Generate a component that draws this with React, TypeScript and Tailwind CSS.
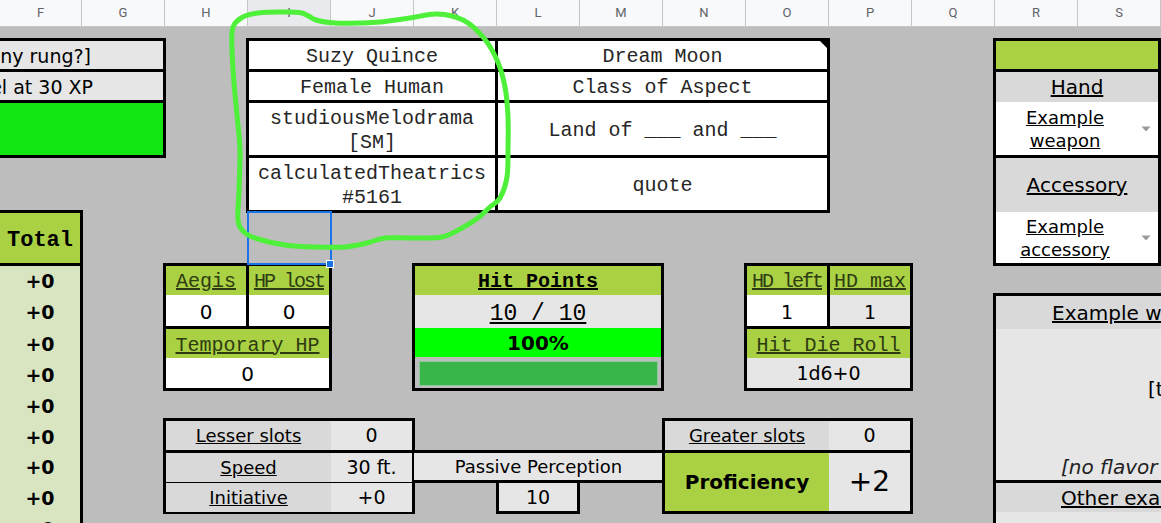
import type { ReactNode } from 'react'
import clsx from 'clsx'

const MONO = "font-['Liberation_Mono',monospace]"
const SANS = "font-['DejaVu_Sans',sans-serif]"

const COLS = ['F', 'G', 'H', 'I', 'J', 'K', 'L', 'M', 'N', 'O', 'P', 'Q', 'R', 'S']

// hand-drawn highlight loop around the name block
const LOOP: [number, number][] = [
  [233, 27], [243, 17], [258, 13], [280, 12], [302, 13], [316, 20], [335, 23], [360, 23],
  [380, 22], [410, 18], [437, 14], [463, 20], [483, 37], [497, 60], [505, 87], [508, 117],
  [508, 150], [507, 177], [500, 198], [490, 207], [478, 218], [462, 228], [442, 237], [412, 238],
  [385, 238], [367, 243], [345, 247], [315, 247], [285, 245], [258, 239], [244, 232], [238, 220],
  [239, 190], [240, 150], [237, 115], [234, 83], [232, 50],
]

function smoothClosed(pts: [number, number][]) {
  const n = pts.length
  const f = (v: number) => v.toFixed(1)
  let d = `M${pts[0][0]},${pts[0][1]}`
  for (let i = 0; i < n; i++) {
    const p0 = pts[(i - 1 + n) % n], p1 = pts[i], p2 = pts[(i + 1) % n], p3 = pts[(i + 2) % n]
    const c1x = p1[0] + (p2[0] - p0[0]) / 6, c1y = p1[1] + (p2[1] - p0[1]) / 6
    const c2x = p2[0] - (p3[0] - p1[0]) / 6, c2y = p2[1] - (p3[1] - p1[1]) / 6
    d += ` C${f(c1x)},${f(c1y)} ${f(c2x)},${f(c2y)} ${p2[0]},${p2[1]}`
  }
  return d + 'Z'
}

function C({ className, children }: { className?: string; children?: ReactNode }) {
  return <div className={clsx('flex items-center justify-center text-center', className)}>{children}</div>
}

function Caret() {
  return (
    <div className="w-[24px] shrink-0 flex items-center justify-center">
      <svg width="10" height="6" viewBox="0 0 10 6"><path d="M0.5 0.5h9L5 5.5z" fill="#9a9a9a" /></svg>
    </div>
  )
}

export default function App() {
  return (
    <div className={clsx('relative w-[1161px] h-[523px] overflow-hidden bg-[#bdbdbd] text-black', SANS)}>
      {/* column header */}
      <div className="flex h-[27px] bg-[#f8f9fa] border-b border-[#c4c7c5]">
        {COLS.map((c, i) => (
          <div
            key={c}
            className={clsx(
              "flex shrink-0 items-center justify-center border-r border-[#c4c7c5] text-[13px] text-[#5f6368] font-['Roboto',sans-serif]",
              i === 0 ? 'w-[82px]' : 'w-[83px]',
              c === 'I' && 'bg-[#e8eaed]',
            )}
          >
            {c}
          </div>
        ))}
      </div>

      {/* sheet body */}
      <div className="grid w-max grid-cols-[82px_repeat(15,83px)] grid-rows-[13px_31px_31px_55px_55px_53px_31px_32px_31px_31px_31px_31px_30px_31px_10px]">
        {/* level block, cut at left */}
        <div className="col-start-1 row-start-2 -ml-[20px] -mt-[2px] w-[186px] h-[120px] grid grid-rows-[28px_28px_52px] gap-y-[3px] bg-black p-[3px] text-[19px]">
          <C className="bg-[#e6e6e6] !justify-end pr-[72px] pt-[3px] overflow-hidden whitespace-nowrap">[how many rung?]</C>
          <C className="bg-[#e6e6e6] !justify-end pr-[70px] pt-[2px] overflow-hidden whitespace-nowrap">Level at 30 XP</C>
          <div className="bg-[#13e713]" />
        </div>

        {/* total column */}
        <div className="col-start-1 row-start-6 -ml-[20px] -mt-[2px] w-[103px] h-[340px] flex flex-col gap-y-[3px] bg-black p-[3px] pb-0">
          <C className={clsx('h-[50px] shrink-0 bg-[#a9d143] pl-[17px] pt-[5px] text-[22px] font-bold', MONO)}>Total</C>
          <div className="flex-1 flex flex-col bg-[#d9e4c1] pl-[17px] text-[19px] font-bold">
            {[30, 32, 31, 31, 31, 31, 30, 31, 31].map((h, i) => (
              <div key={i} style={{ height: h }} className="shrink-0 flex items-center justify-center pt-[1px]">+0</div>
            ))}
          </div>
        </div>

        {/* name block */}
        <div className={clsx('col-start-4 row-start-2 -ml-[2px] -mt-[2px] w-[584px] h-[175px] grid grid-cols-[246px_329px] grid-rows-[28px_28px_52px_52px] gap-[3px] bg-black p-[3px] text-[20px] leading-[24px] text-[#262626]', MONO)}>
          <C className="bg-white pt-[4px]">Suzy Quince</C>
          <C className="bg-white relative pt-[4px]">
            Dream Moon
            <svg className="absolute right-0 top-0" width="7" height="7" viewBox="0 0 7 7"><path d="M0 0h7v7z" fill="#000" /></svg>
          </C>
          <C className="bg-white pt-[4px]">Female Human</C>
          <C className="bg-white pt-[4px]">Class of Aspect</C>
          <C className="bg-white pt-[4px]">studiousMelodrama<br />[SM]</C>
          <C className="bg-white pt-[4px]">Land of ___ and ___</C>
          <C className="bg-white pt-[4px]">calculatedTheatrics<br />#5161</C>
          <C className="bg-white pt-[4px]">quote</C>
        </div>

        {/* selected cell */}
        <div className="col-start-4 row-start-6 -ml-[1px] -mt-[1px] w-[85px] h-[54px] border-2 border-[#1a73e8] relative z-10">
          <div className="absolute -right-[4px] -bottom-[5px] w-[8px] h-[8px] bg-[#1a73e8] border border-white" />
        </div>

        {/* aegis */}
        <div className="col-start-3 row-start-7 -ml-[2px] -mt-[2px] w-[169px] h-[128px] flex flex-col gap-y-[3px] bg-black p-[3px]">
          <div className="grid grid-cols-[80px_80px] grid-rows-[29px_31px] gap-x-[3px]">
            <C className={clsx('bg-[#a9d143] pt-[2px] text-[20px] underline text-[#2e3b12]', MONO)}>Aegis</C>
            <C className={clsx('bg-[#a9d143] pt-[2px] text-[20px] underline text-[#2e3b12] tracking-[-2px] whitespace-nowrap', MONO)}>HP lost</C>
            <C className="bg-white pt-[3px] text-[20px]">0</C>
            <C className="bg-white pt-[3px] text-[20px]">0</C>
          </div>
          <div className="grid grid-rows-[29px_30px]">
            <C className={clsx('bg-[#a9d143] pt-[4px] text-[20px] underline text-[#2e3b12]', MONO)}>Temporary HP</C>
            <C className="bg-white pt-[2px] text-[20px]">0</C>
          </div>
        </div>

        {/* hit points */}
        <div className="col-start-6 row-start-7 -ml-[2px] -mt-[2px] w-[252px] h-[128px] grid grid-rows-[29px_33px_29px_31px] border-[3px] border-black">
          <C className={clsx('bg-[#a9d143] pt-[2px] text-[20px] font-bold underline', MONO)}>Hit Points</C>
          <C className={clsx('bg-[#e6e6e6] pt-[5px] text-[23px] underline', MONO)}>10 / 10</C>
          <C className="bg-[#00ff00] text-[20px] font-bold">100%</C>
          <div className="bg-[#bdbdbd] pl-[4px] pr-[3px] pt-[4px] pb-[2px]">
            <div className="h-full bg-[#3ab54a] border border-[#8fc89a]" />
          </div>
        </div>

        {/* hit dice */}
        <div className="col-start-10 row-start-7 -ml-[2px] -mt-[2px] w-[169px] h-[128px] flex flex-col gap-y-[3px] bg-black p-[3px]">
          <div className="grid grid-cols-[80px_80px] grid-rows-[29px_31px] gap-x-[3px]">
            <C className={clsx('bg-[#a9d143] pt-[2px] text-[20px] underline text-[#2e3b12] tracking-[-2px] whitespace-nowrap', MONO)}>HD left</C>
            <C className={clsx('bg-[#a9d143] pt-[2px] text-[20px] underline text-[#2e3b12] whitespace-nowrap', MONO)}>HD max</C>
            <C className="bg-white pt-[3px] text-[19px]">1</C>
            <C className="bg-[#e6e6e6] pt-[3px] text-[19px]">1</C>
          </div>
          <div className="grid grid-rows-[29px_30px]">
            <C className={clsx('bg-[#a9d143] pt-[4px] text-[20px] underline text-[#2e3b12]', MONO)}>Hit Die Roll</C>
            <C className="bg-[#e6e6e6] text-[19px]">1d6+0</C>
          </div>
        </div>

        {/* lesser slots / speed / initiative */}
        <div className="col-start-3 row-start-12 -ml-[2px] -mt-[3px] w-[252px] h-[96px] grid grid-rows-[29px_27px_28px] gap-y-[3px] bg-black p-[3px]">
          {[['Lesser slots', '0'], ['Speed', '30 ft.'], ['Initiative', '+0']].map(([k, v]) => (
            <div key={k} className="grid grid-cols-[165px_81px]">
              <C className="bg-[#d9d9d9] text-[18px] underline">{k}</C>
              <C className="bg-[#e6e6e6] text-[19px]">{v}</C>
            </div>
          ))}
        </div>

        {/* passive perception */}
        <C className="col-start-6 row-start-13 -mt-[2px] w-[249px] h-[33px] border-y-[3px] border-black bg-[#e6e6e6] text-[18px]">
          Passive Perception
        </C>
        <C className="col-start-7 row-start-14 -ml-[1px] mt-[1px] w-[84px] h-[31px] border-x-[3px] border-b-[3px] border-black bg-[#e6e6e6] text-[19px]">
          10
        </C>

        {/* greater slots / proficiency */}
        <div className="col-start-9 row-start-12 -ml-[1px] -mt-[3px] w-[251px] h-[96px] flex flex-col gap-y-[3px] bg-black p-[3px]">
          <div className="grid grid-cols-[164px_81px] h-[29px]">
            <C className="bg-[#d9d9d9] text-[18px] underline">Greater slots</C>
            <C className="bg-[#e6e6e6] text-[19px]">0</C>
          </div>
          <div className="grid grid-cols-[164px_81px] h-[58px]">
            <C className="bg-[#a9d143] text-[20px] font-bold">Proficiency</C>
            <C className="bg-[#e6e6e6] text-[28px]">+2</C>
          </div>
        </div>

        {/* equipment */}
        <div className="col-start-13 row-start-2 -ml-[2px] -mt-[2px] w-[168px] h-[228px] flex flex-col gap-y-[3px] bg-black p-[3px]">
          <div className="h-[28px] bg-[#a9d143]" />
          <div className="flex flex-col">
            <C className="h-[30px] bg-[#d9d9d9] text-[20px] underline">Hand</C>
            <div className="h-[53px] bg-white flex items-center">
              <div className="flex-1 text-center text-[18px] leading-[23px] underline">Example weapon</div>
              <Caret />
            </div>
          </div>
          <div className="flex flex-col">
            <C className="h-[54px] bg-[#d9d9d9] text-[20px] underline">Accessory</C>
            <div className="h-[51px] bg-white flex items-center">
              <div className="flex-1 text-center text-[18px] leading-[23px] underline">Example accessory</div>
              <Caret />
            </div>
          </div>
        </div>

        {/* example weapon card, runs off the right edge */}
        <div className="col-start-13 row-start-8 -ml-[2px] -mt-[3px] w-[334px] h-[260px] flex flex-col gap-y-[3px] bg-black pl-[3px] pt-[3px]">
          <div className="flex flex-col">
            <div className="h-[33px] bg-[#d9d9d9] pl-[56px] flex items-center whitespace-nowrap text-[20px]">
              <span className="underline">Example weapon</span>
            </div>
            <div className="h-[151px] bg-[#e6e6e6] flex flex-col whitespace-nowrap text-[20px] leading-[24px]">
              <div className="pl-[152px] pt-[48px]">[tags]</div>
              <div className="pl-[65px] mt-[54px] italic text-[#222]">[no flavor text]</div>
            </div>
          </div>
          <div className="flex flex-col">
            <div className="h-[29px] bg-[#d9d9d9] pl-[65px] flex items-center whitespace-nowrap text-[20px]">
              <span className="underline">Other examples</span>
            </div>
            <div className="h-[60px] bg-[#e6e6e6]" />
          </div>
        </div>
      </div>

      {/* green marker loop */}
      <svg className="pointer-events-none absolute inset-0 z-20" width="1161" height="523" viewBox="0 0 1161 523">
        <path d={smoothClosed(LOOP)} fill="none" stroke="#4ef03a" strokeWidth="5" strokeLinecap="round" strokeLinejoin="round" />
      </svg>
    </div>
  )
}
